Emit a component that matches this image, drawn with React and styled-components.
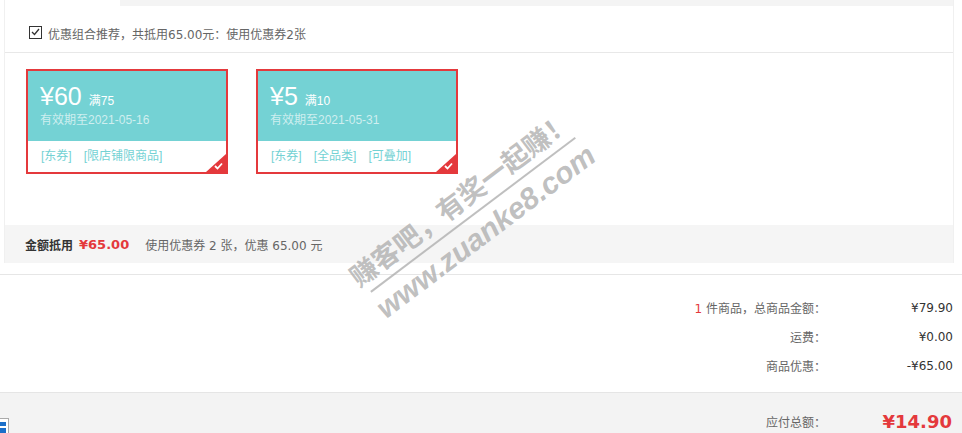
import React from 'react';
import styled, { createGlobalStyle } from 'styled-components';

const GlobalStyle = createGlobalStyle`
  body {
    margin: 0;
    background: #fff;
    font-family: "DejaVu Sans", "Noto Sans CJK SC", sans-serif;
    font-size: 12px;
    color: #666;
  }
`;

const Page = styled.div`
  position: relative;
  width: 962px;
  overflow: hidden;
`;

const CouponPanel = styled.div`
  margin-left: 4px;
  width: 948px;
  border-left: 1px solid #f0f0f0;
  border-right: 1px solid #f0f0f0;
`;

const TabStrip = styled.div`
  height: 6px;
  margin-left: 115px;
  background: #f4f4f4;
`;

const ComboRow = styled.label`
  display: flex;
  align-items: center;
  gap: 6px;
  height: 38px;
  padding: 8px 0 0 24px;
  border-bottom: 1px solid #e8e8e8;
  color: #666;
`;

const CheckBox = styled.span`
  width: 11px;
  height: 11px;
  border: 1px solid #333;
  display: flex;
  align-items: center;
  justify-content: center;
  margin-top: -2px;
`;

const CouponList = styled.div`
  display: flex;
  gap: 28px;
  padding: 16px 0 51px 21px;
`;

const Card = styled.div`
  position: relative;
  width: 198px;
  border: 2px solid #e4393c;
  font-family: "Liberation Sans", "Noto Sans CJK SC", sans-serif;
`;

const CardTop = styled.div`
  height: 57px;
  padding: 13px 0 0 12px;
  background: #74d2d4;
  color: #fff;
`;

const Amount = styled.div`
  display: flex;
  align-items: baseline;
  height: 24px;
  line-height: 24px;
  font-size: 25px;
`;

const Condition = styled.span`
  margin-left: 7px;
  font-size: 12px;
`;

const Expiry = styled.div`
  margin-top: 4px;
  line-height: 16px;
  font-size: 12px;
  color: rgba(255, 255, 255, 0.66);
`;

const CardTags = styled.div`
  display: flex;
  gap: 10px;
  height: 31px;
  line-height: 31px;
  padding-left: 12px;
  color: #74d2d4;
  font-size: 12px;
`;

const Tag = styled.span`
  padding: 0 1px;
`;

const Corner = styled.svg`
  position: absolute;
  right: 0;
  bottom: 0;
`;

const DeductBar = styled.div`
  display: flex;
  align-items: center;
  height: 38px;
  padding-left: 20px;
  background: #f5f5f5;
`;

const DeductLabel = styled.span`
  font-size: 12px;
  font-weight: bold;
  color: #333;
`;

const DeductAmount = styled.span`
  margin-left: 6px;
  font-size: 13px;
  font-weight: bold;
  color: #e4393c;
`;

const DeductNote = styled.span`
  margin-left: 16px;
  color: #666;
`;

const Divider = styled.div`
  margin-top: 11px;
  border-top: 1px solid #e6e6e6;
`;

const Totals = styled.div`
  padding: 18px 9px 12px 0;
`;

const TotalRow = styled.div`
  display: flex;
  justify-content: flex-end;
  align-items: center;
  height: 29px;
`;

const TotalLabel = styled.span`
  text-align: right;
  color: #666;
`;

const Count = styled.span`
  color: #e4393c;
`;

const TotalValue = styled.span`
  width: 127px;
  text-align: right;
  color: #333;
`;

const PayBar = styled.div`
  display: flex;
  align-items: center;
  height: 56px;
  padding-right: 10px;
  border-top: 1px solid #e5e5e5;
  background: #f3f3f3;
`;

const FloatTab = styled.div`
  align-self: flex-start;
  margin-top: 25px;
  width: 9px;
  height: 30px;
  border: 1px solid #aaa;
  border-left: none;
  background: #fff;
  display: flex;
  flex-direction: column;
  gap: 2px;
  padding-top: 3px;
  box-sizing: border-box;
`;

const FloatMark = styled.span`
  width: 6px;
  height: ${p => p.$h}px;
  background: #1b6fc9;
`;

const PayLabel = styled.span`
  margin-left: auto;
  color: #666;
`;

const PayValue = styled.span`
  width: 126px;
  text-align: right;
  font-size: 18px;
  font-weight: bold;
  color: #e4393c;
`;

const Watermark = styled.div`
  position: absolute;
  left: 474px;
  top: 216px;
  transform: translate(-50%, -50%) rotate(-37deg);
  display: flex;
  flex-direction: column;
  align-items: center;
  color: rgba(175, 175, 175, 0.8);
  font-family: "Liberation Sans", "Noto Sans CJK SC", sans-serif;
  font-weight: bold;
  pointer-events: none;
  white-space: nowrap;
`;

const MarkTitle = styled.div`
  font-size: 27px;
  line-height: 30px;
`;

const MarkRule = styled.div`
  width: 256px;
  border-top: 2px solid rgba(175, 175, 175, 0.8);
  margin: 3px 0 4px;
`;

const MarkUrl = styled.div`
  font-size: 30px;
  line-height: 32px;
  font-style: italic;
`;

const coupons = [
  { amount: '60', min: '75', date: '2021-05-16', tags: ['东券', '限店铺限商品'] },
  { amount: '5', min: '10', date: '2021-05-31', tags: ['东券', '全品类', '可叠加'] },
];

function CouponCard({ coupon }) {
  return (
    <Card>
      <CardTop>
        <Amount>
          ¥{coupon.amount}
          <Condition>满{coupon.min}</Condition>
        </Amount>
        <Expiry>有效期至{coupon.date}</Expiry>
      </CardTop>
      <CardTags>
        {coupon.tags.map(t => (
          <Tag key={t}>[{t}]</Tag>
        ))}
      </CardTags>
      <Corner width="20" height="18" viewBox="0 0 20 18">
        <polygon points="20,0 20,18 0,18" fill="#e4393c" />
        <path d="M9 12 L11.5 14.5 L16 9.5" stroke="#fff" strokeWidth="1.8" fill="none" />
      </Corner>
    </Card>
  );
}

export default function App() {
  return (
    <Page>
      <GlobalStyle />
      <CouponPanel>
        <TabStrip />
        <ComboRow>
          <CheckBox>
            <svg width="9" height="8" viewBox="0 0 9 8">
              <path d="M1 4 L3.5 6.5 L8 1" stroke="#333" strokeWidth="1.3" fill="none" />
            </svg>
          </CheckBox>
          优惠组合推荐，共抵用65.00元：使用优惠券2张
        </ComboRow>
        <CouponList>
          {coupons.map(c => (
            <CouponCard key={c.amount} coupon={c} />
          ))}
        </CouponList>
        <DeductBar>
          <DeductLabel>金额抵用</DeductLabel>
          <DeductAmount>¥65.00</DeductAmount>
          <DeductNote>使用优惠券 2 张，优惠 65.00 元</DeductNote>
        </DeductBar>
      </CouponPanel>
      <Divider />
      <Totals>
        <TotalRow>
          <TotalLabel><Count>1</Count> 件商品，总商品金额：</TotalLabel>
          <TotalValue>¥79.90</TotalValue>
        </TotalRow>
        <TotalRow>
          <TotalLabel>运费：</TotalLabel>
          <TotalValue>¥0.00</TotalValue>
        </TotalRow>
        <TotalRow>
          <TotalLabel>商品优惠：</TotalLabel>
          <TotalValue>-¥65.00</TotalValue>
        </TotalRow>
      </Totals>
      <PayBar>
        <FloatTab>
          <FloatMark $h={4} />
          <FloatMark $h={6} />
        </FloatTab>
        <PayLabel>应付总额：</PayLabel>
        <PayValue>¥14.90</PayValue>
      </PayBar>
      <Watermark>
        <MarkTitle>赚客吧，有奖一起赚！</MarkTitle>
        <MarkRule />
        <MarkUrl>www.zuanke8.com</MarkUrl>
      </Watermark>
    </Page>
  );
}
